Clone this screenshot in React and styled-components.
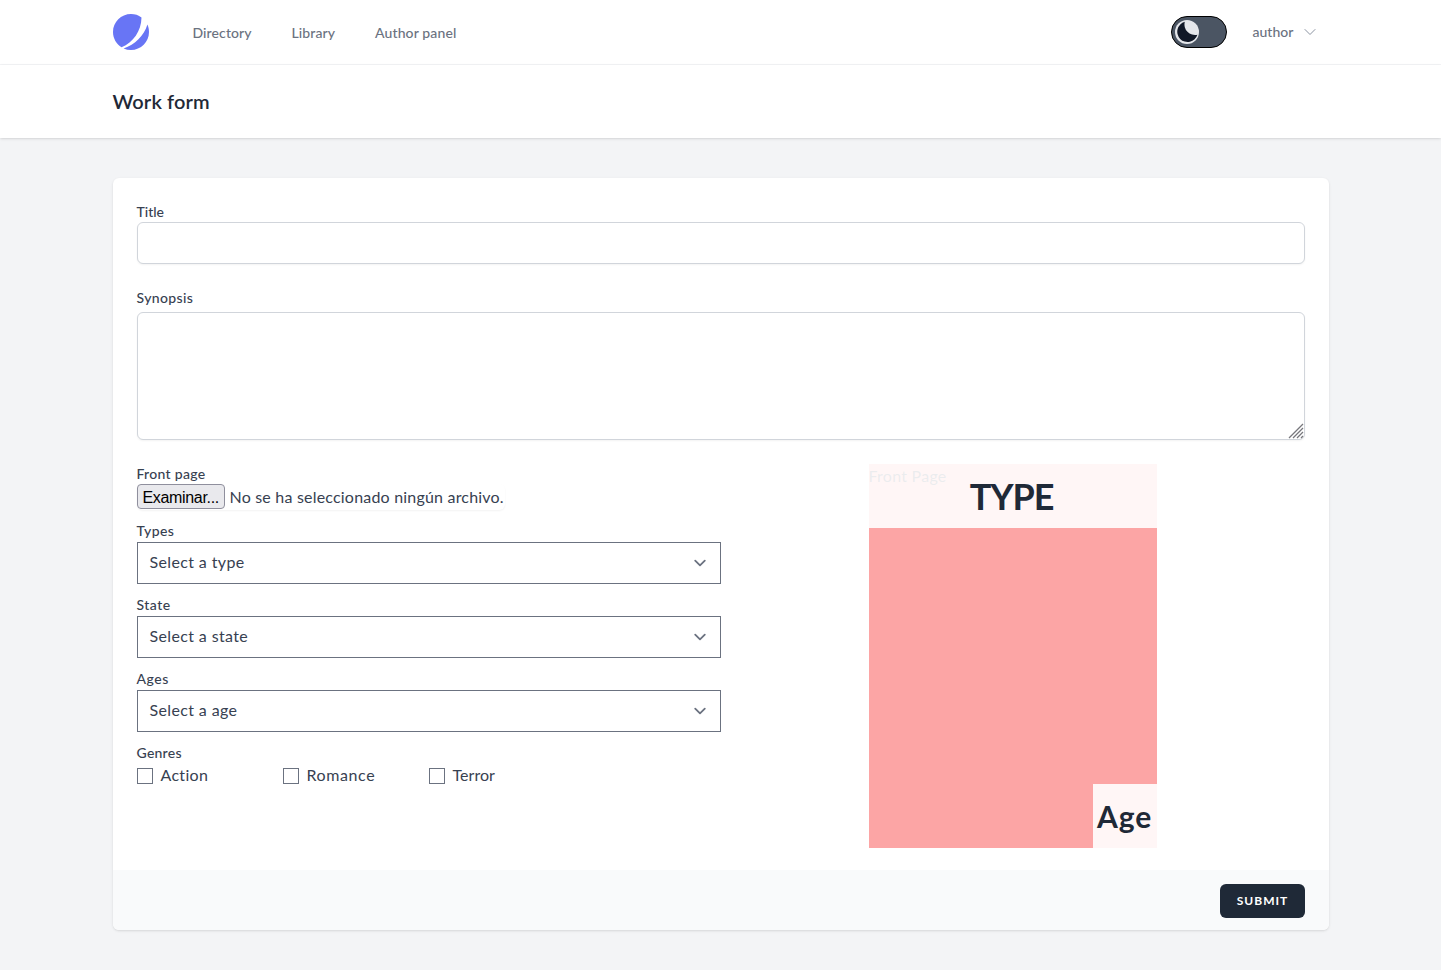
import React from "react";
import styled, { createGlobalStyle } from "styled-components";

const GlobalStyle = createGlobalStyle`
  *, *::before, *::after { box-sizing: border-box; }
  body {
    margin: 0;
    background: #f3f4f6;
    color: #374151;
    font: 400 16px/24px Lato, "Liberation Sans", sans-serif;
  }
`;

const Page = styled.div`
  min-height: 970px;
`;

const Container = styled.div`
  max-width: 1280px;
  margin: 0 auto;
  padding: 0 32px;
`;

const NavBar = styled.nav`
  background: #fff;
  border-bottom: 1px solid #f3f4f6;
`;

const NavRow = styled(Container)`
  display: flex;
  align-items: center;
  height: 64px;
`;

const Logo = styled.svg`
  display: block;
  width: 36px;
  height: 36px;
`;

const NavLinks = styled.div`
  display: flex;
  gap: 40px;
  margin-left: 44px;
  padding-top: 2px;
`;

const NavLink = styled.a`
  width: ${(p) => p.$width}px;
  white-space: nowrap;
  font-size: 14px;
  line-height: 20px;
  font-weight: 500;
  color: #6b7280;
  letter-spacing: ${(p) => p.$track || 0}px;
`;

const NavRight = styled.div`
  display: flex;
  align-items: center;
  margin-left: auto;
  padding-right: 11px;
`;

const Toggle = styled.div`
  display: flex;
  align-items: center;
  width: 56px;
  height: 32px;
  padding-left: 3px;
  margin-right: 26px;
  border: 1px solid #000;
  border-radius: 16px;
  background: #4b5563;
`;

const Knob = styled.svg`
  display: block;
  width: 24px;
  height: 24px;
`;

const Chevron = styled.svg`
  display: block;
  width: 16px;
  height: 16px;
  margin-left: 7px;
  color: #8b93a1;
`;

const Header = styled.header`
  position: relative;
  background: #fff;
  box-shadow: 0 1px 3px rgba(0, 0, 0, 0.1), 0 1px 2px -1px rgba(0, 0, 0, 0.1);
`;

const Heading = styled.h2`
  margin: 0;
  padding: 24px 0;
  font-size: 20px;
  line-height: 25px;
  font-weight: 600;
  color: #1f2937;
  letter-spacing: 0.13px;
`;

const Card = styled.form`
  margin: 40px 0;
  border-radius: 6px;
  background: #fff;
  overflow: hidden;
  box-shadow: 0 1px 3px rgba(0, 0, 0, 0.1), 0 1px 2px -1px rgba(0, 0, 0, 0.1);
`;

const CardBody = styled.div`
  height: 692px;
  padding: 24px;
`;

const Label = styled.label`
  display: block;
  height: ${(p) => p.$height || 20}px;
  font-size: 14px;
  line-height: 20px;
  font-weight: 500;
  color: #374151;
  letter-spacing: ${(p) => p.$track || 0}px;
`;

const TextInput = styled.input`
  display: block;
  width: 100%;
  height: 42px;
  margin-bottom: 24px;
  padding: 8px 12px;
  border: 1px solid #d1d5db;
  border-radius: 6px;
  background: #fff;
  box-shadow: 0 1px 2px rgba(0, 0, 0, 0.05);
`;

const AreaWrap = styled.div`
  position: relative;
  height: 128px;
  margin-bottom: 24px;
`;

const TextArea = styled.textarea`
  display: block;
  width: 100%;
  height: 128px;
  padding: 8px 12px;
  border: 1px solid #d1d5db;
  border-radius: 6px;
  background: #fff;
  resize: none;
  box-shadow: 0 1px 2px rgba(0, 0, 0, 0.05);
`;

const Grip = styled.svg`
  position: absolute;
  right: 1px;
  bottom: 1px;
  width: 16px;
  height: 16px;
`;

const Columns = styled.div`
  display: grid;
  grid-template-columns: 1fr 1fr;
`;

const FileField = styled.div`
  display: flex;
  align-items: flex-start;
  width: 368px;
  height: 26px;
  margin-bottom: 11px;
  border-radius: 6px;
  box-shadow: 0 1px 2px rgba(0, 0, 0, 0.05);
`;

const BrowseButton = styled.button`
  width: 88px;
  height: 25px;
  margin: 0 5px 0 0;
  padding: 2px 0 0 5px;
  border: 1px solid #8f8f9d;
  border-radius: 4px;
  background: #e9e9ed;
  color: #000;
  text-align: left;
  white-space: nowrap;
  font: 16px/21px "Liberation Sans", Arial, sans-serif;
  letter-spacing: -0.33px;
`;

const FileName = styled.span`
  white-space: nowrap;
  line-height: 26px;
  letter-spacing: 0.2px;
`;

const SelectBox = styled.div`
  display: flex;
  align-items: center;
  justify-content: space-between;
  height: 42px;
  margin-bottom: 11px;
  padding: 0 8px 0 12px;
  border: 1px solid #6b7280;
`;

const SelectText = styled.span`
  padding-bottom: 2px;
  letter-spacing: 0.37px;
`;

const SelectArrow = styled.svg`
  display: block;
  width: 24px;
  height: 24px;
`;

const Genres = styled.div`
  display: grid;
  grid-template-columns: repeat(4, 1fr);
`;

const Genre = styled.label`
  display: flex;
  align-items: center;
  gap: 8px;
  height: 24px;
  line-height: 22px;
  letter-spacing: ${(p) => p.$track || 0}px;
`;

const GenreName = styled.span`
  padding-bottom: 2px;
`;

const Box = styled.input`
  appearance: none;
  width: 16px;
  height: 16px;
  margin: 0;
  border: 1px solid #6b7280;
  background: #fff;
`;

const Cover = styled.div`
  position: relative;
  justify-self: center;
  width: 288px;
  height: 384px;
  background: #fca5a5;
  line-height: 24px;
  letter-spacing: 0.25px;
`;

const Veil = styled.div`
  position: absolute;
  display: flex;
  align-items: center;
  justify-content: center;
  background: rgba(255, 255, 255, 0.9);
  color: #1f2937;
  height: 64px;
`;

const TypeVeil = styled(Veil)`
  top: 0;
  left: 0;
  right: 0;
  padding-right: 2px;
  font-size: 36px;
  font-weight: 700;
  letter-spacing: -1.1px;
`;

const AgeVeil = styled(Veil)`
  right: 0;
  bottom: 0;
  width: 64px;
  font-size: 30px;
  font-weight: 700;
  letter-spacing: 0.9px;
`;

const CardFooter = styled.div`
  display: flex;
  align-items: center;
  justify-content: flex-end;
  height: 60px;
  padding: 2px 24px 0;
  background: #f9fafb;
`;

const Submit = styled.button`
  width: 85px;
  height: 34px;
  padding: 0;
  border: 0;
  border-radius: 6px;
  background: #1f2937;
  color: #fff;
  font: 700 12px/16px Lato, "Liberation Sans", sans-serif;
  letter-spacing: 1px;
  text-indent: 1px;
`;

const links = [
  { text: "Directory", width: 59, track: 0.1 },
  { text: "Library", width: 43.5, track: 0.1 },
  { text: "Author panel", width: 82, track: 0.13 },
];

const selects = [
  { label: "Types", text: "Select a type", track: 0.4 },
  { label: "State", text: "Select a state", track: 0.5 },
  { label: "Ages", text: "Select a age", track: 0.5 },
];

const genres = [
  { text: "Action", track: 0.3 },
  { text: "Romance", track: 0.6 },
  { text: "Terror", track: 0.05 },
];

export default function App() {
  return (
    <Page>
      <GlobalStyle />
      <NavBar>
        <NavRow>
          <Logo viewBox="0 0 48 48" fill="#6875F5">
            <path d="M11.395 44.428C4.557 40.198 0 32.632 0 24 0 10.745 10.745 0 24 0a23.891 23.891 0 0113.997 4.502c-.2 17.907-11.097 33.245-26.602 39.926z" />
            <path d="M14.134 45.885A23.914 23.914 0 0024 48c13.255 0 24-10.745 24-24 0-3.516-.756-6.856-2.115-9.866-4.659 15.143-16.608 27.092-31.75 31.751z" />
          </Logo>
          <NavLinks>
            {links.map((l) => (
              <NavLink key={l.text} $width={l.width} $track={l.track}>{l.text}</NavLink>
            ))}
          </NavLinks>
          <NavRight>
            <Toggle>
              <Knob viewBox="0 0 24 24">
                <circle cx="12" cy="12" r="12" fill="#e5e7eb" />
                <path d="M9.8 1.8A10.6 10.6 0 0 0 22.4 14.8 10.3 10.3 0 1 1 9.8 1.8z" fill="#111827" />
              </Knob>
            </Toggle>
            <NavLink $width={42}>author</NavLink>
            <Chevron viewBox="0 0 24 24" fill="none" stroke="currentColor" strokeWidth="1.5" strokeLinecap="round" strokeLinejoin="round">
              <path d="M19.5 8.25l-7.5 7.5-7.5-7.5" />
            </Chevron>
          </NavRight>
        </NavRow>
      </NavBar>
      <Header>
        <Container>
          <Heading>Work form</Heading>
        </Container>
      </Header>
      <Container>
        <Card>
          <CardBody>
            <Label>Title</Label>
            <TextInput />
            <Label $height={24} $track={0.38}>Synopsis</Label>
            <AreaWrap>
              <TextArea />
              <Grip viewBox="0 0 16 16" stroke="#77777c" strokeWidth="1.3" fill="none">
                <path d="M1 15L15 1M5 15L15 5M9 15L15 9M13 15l2-2" />
              </Grip>
            </AreaWrap>
            <Columns>
              <div>
                <Label $track={0.3}>Front page</Label>
                <FileField>
                  <BrowseButton type="button">Examinar...</BrowseButton>
                  <FileName>No se ha seleccionado ningún archivo.</FileName>
                </FileField>
                {selects.map((s) => (
                  <React.Fragment key={s.label}>
                    <Label $height={21} $track={s.track}>{s.label}</Label>
                    <SelectBox>
                      <SelectText>{s.text}</SelectText>
                      <SelectArrow viewBox="0 0 20 20" fill="none" stroke="#6b7280" strokeWidth="1.5" strokeLinecap="round" strokeLinejoin="round">
                        <path d="M6 8l4 4 4-4" />
                      </SelectArrow>
                    </SelectBox>
                  </React.Fragment>
                ))}
                <Label $height={21} $track={0.25}>Genres</Label>
                <Genres>
                  {genres.map((g) => (
                    <Genre key={g.text} $track={g.track}>
                      <Box type="checkbox" />
                      <GenreName>{g.text}</GenreName>
                    </Genre>
                  ))}
                </Genres>
              </div>
              <Cover>
                Front Page
                <TypeVeil>TYPE</TypeVeil>
                <AgeVeil>Age</AgeVeil>
              </Cover>
            </Columns>
          </CardBody>
          <CardFooter>
            <Submit type="button">SUBMIT</Submit>
          </CardFooter>
        </Card>
      </Container>
    </Page>
  );
}
